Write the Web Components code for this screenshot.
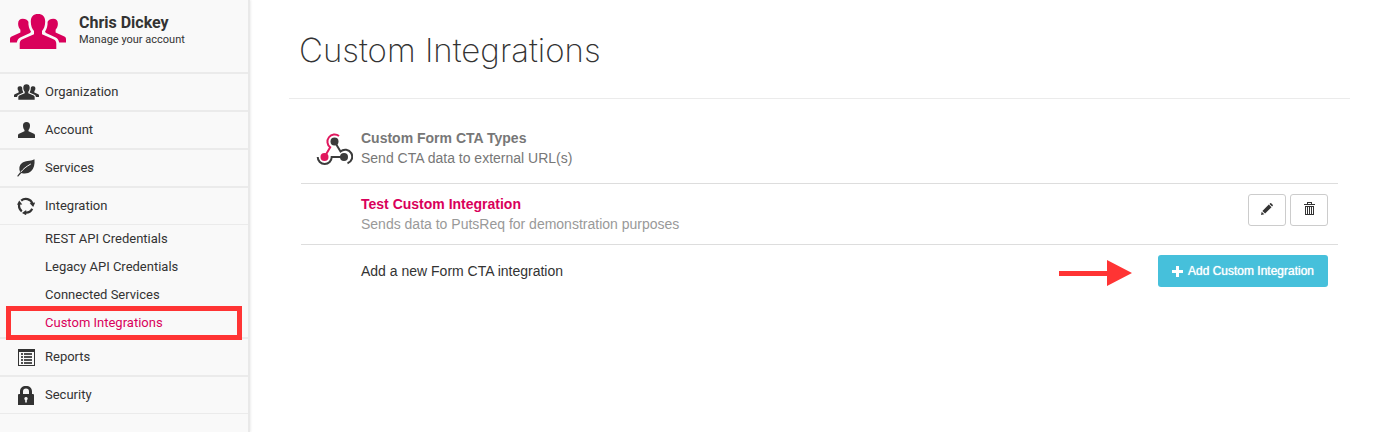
<!DOCTYPE html>
<html lang="en">
<head>
<meta charset="utf-8">
<meta name="viewport" content="width=device-width, initial-scale=1">
<title>Custom Integrations</title>
<style>
  body {
    margin: 0;
    background: #fff;
    color: #333;
    font-family: "Liberation Sans", Arial, sans-serif;
    font-size: 14px;
    line-height: 20px;
  }
</style>
</head>
<body>
<app-shell>
  <side-nav slot="nav">
    <account-card slot="account" name="Chris Dickey">Manage your account</account-card>
    <nav-item icon="group" label="Organization"></nav-item>
    <nav-item icon="person" label="Account"></nav-item>
    <nav-item icon="leaf" label="Services"></nav-item>
    <nav-item icon="cycle" label="Integration">
      <nav-link>REST API Credentials</nav-link>
      <nav-link>Legacy API Credentials</nav-link>
      <nav-link>Connected Services</nav-link>
      <nav-link current>Custom Integrations</nav-link>
    </nav-item>
    <nav-item icon="report" label="Reports"></nav-item>
    <nav-item icon="lock" label="Security"></nav-item>
  </side-nav>
  <page-title>Custom Integrations</page-title>
  <integration-list>
    <integration-head>
      Custom Form CTA Types
      <span slot="note">Send CTA data to external URL(s)</span>
    </integration-head>
    <integration-row>
      Test Custom Integration
      <span slot="note">Sends data to PutsReq for demonstration purposes</span>
    </integration-row>
    <integration-add action="Add Custom Integration">Add a new Form CTA integration</integration-add>
  </integration-list>
</app-shell>

<script>
const ICONS = {
  group: {
    box: "0 0 56 35",
    body: `
      <path d="M28 0c4.600 0 7.200 2.600 7.200 7.500 0 4.500-1.400 7.500-3.200 9.500v3.200l12 5.300c1.600.8 2.300 2.200 2.300 4.500v5H9.700v-5c0-2.300.7-3.700 2.300-4.500l12-5.300V17c-1.800-2-3.200-5-3.200-9.500C20.800 2.600 23.400 0 28 0z"/>
      <path d="M12.800 4.800c2.700 0 4.600 1 5.600 3-.2 4 .8 7.200 2.600 10l-1 1.200-9.800 4.500c-1.600.8-2.800 2.400-3.400 5H0v-3.600c0-1.200.5-2 1.600-2.500l8.800-4v-2.600c-1.300-1.600-2.300-3.400-2.300-6 0-3.300 1.700-5 4.700-5z"/>
      <path d="M43.200 4.800c-2.700 0-4.600 1-5.600 3 .2 4-.8 7.200-2.600 10l1 1.200 9.800 4.500c1.600.8 2.800 2.400 3.400 5H56v-3.600c0-1.200-.5-2-1.600-2.500l-8.800-4v-2.600c1.300-1.600 2.300-3.400 2.300-6 0-3.300-1.700-5-4.700-5z"/>`
  },
  person: {
    box: "0 0 17 16",
    body: `<path d="M8.500 0c2.300 0 3.500 1.300 3.500 3.500 0 2-.7 3.500-1.500 4.500v1.200l5.500 2.500c.7.300 1 .9 1 1.900V16H0v-2.400c0-1 .3-1.600 1-1.900l5.500-2.500V8C5.700 7 5 5.500 5 3.500 5 1.300 6.200 0 8.500 0z"/>`
  },
  leaf: {
    box: "0 0 18 18",
    body: `
      <path d="M17.500.3c.4 5.200-.5 9.400-3.500 12-2.700 2.300-6.200 2.700-9.600 1.700L1 17.800.2 17l2.900-3.700C1.600 9.600 2.300 6.200 5 4 8 1.500 13 2.600 17.500.3z"/>
      <path d="M3.600 13.300c2.700-3.500 6-6 10.200-8.300" fill="none" stroke="#f9f9f9" stroke-width="1"/>`
  },
  cycle: {
    box: "0 0 18 18",
    body: `
      <g fill="none" stroke="currentColor" stroke-width="2.200">
        <path d="M4.200 3.600A7 7 0 0 1 15.400 6.500"/>
        <path d="M15.200 11.800A7 7 0 0 1 8.500 15.700"/>
        <path d="M4.800 14.300A7 7 0 0 1 2.300 7"/>
      </g>
      <path d="M12.700 6.200 18.200 5.500 16.200 10zM9.200 13v5.300L5 15.900zM0 7.800 2.200 3.400 5.300 7.500z"/>`
  },
  report: {
    box: "0 0 17 17",
    body: `
      <path fill-rule="evenodd" d="M0 0h17v17H0zM1 3v13h15V3z"/>
      <path d="M3 4h2v2H3zM6 4h8v2H6zM3 7h2v2H3zM6 7h8v2H6zM3 10h2v2H3zM6 10h8v2H6zM3 13h2v2H3zM6 13h8v2H6z" opacity=".85"/>`
  },
  lock: {
    box: "0 0 16 19",
    body: `<path fill-rule="evenodd" d="M2 8V5.500C2 2 4.300 0 8 0s6 2 6 5.500V8h1q1 0 1 1v10H0V9q0-1 1-1zM5 8h6V5.500C11 3.700 10 2.600 8 2.600S5 3.700 5 5.500zM8 11a1.700 1.700 0 0 0-.8 3.200V16.500h1.600v-2.300A1.700 1.700 0 0 0 8 11z"/>`
  },
  webhook: {
    box: "0 0 37 35",
    body: `
      <g fill="none" stroke-width="2">
        <path stroke="#e0185e" d="M23 4A7 7 0 1 0 14.200 15.300L8.500 25"/>
        <path stroke="#3b3b3b" d="M18.500 9.500l6 10A7 7 0 1 1 31.500 31.300"/>
        <path stroke="#3b3b3b" d="M28 25H15.700A7 7 0 0 1 1.700 25"/>
      </g>
      <circle cx="18.500" cy="9.500" r="4" fill="#3b3b3b"/>
      <circle cx="8.500" cy="25" r="4" fill="#e0185e"/>
      <circle cx="28" cy="25" r="4" fill="#3b3b3b"/>`
  },
  pencil: {
    box: "0 0 12 12",
    body: `<path d="M0 12l.7-3.300 2.600 2.600zM1.400 7.900 7.800 1.500l2.700 2.700-6.400 6.400zM8.500.9l.7-.6q.5-.5 1 0l1.500 1.500q.5.500 0 1l-.6.700z"/>`
  },
  trash: {
    box: "0 0 11 13",
    body: `
      <path d="M0 2h11v1H0zM3 0h5v2H7V1H4v1H3z"/>
      <path fill-rule="evenodd" d="M1 4h9v9H1zM2 5v7h1V5zM4 5v7h1V5zM6 5v7h1V5zM8 5v7h1V5z"/>`
  },
  plus: {
    box: "0 0 11 11",
    body: `<path d="M4 0h3v4h4v3H7v4H4V7H0V4h4z"/>`
  },
  arrow: {
    box: "0 0 73 26",
    body: `<path d="M0 11h48V0l25 13-25 13V16H0z"/>`
  }
};

// Shared base: every element renders its html() into an open shadow root
class BaseElement extends HTMLElement {
  constructor() {
    super();
    this.attachShadow({ mode: "open" });
  }
  connectedCallback() {
    this.shadowRoot.innerHTML = this.html();
  }
  html() {
    return "";
  }
}

class AppIcon extends BaseElement {
  html() {
    const icon = ICONS[this.getAttribute("name")];
    const [, , w, h] = icon.box.split(" ");
    const width = this.getAttribute("width") || w;
    return `
      <style>
        :host { display: inline-flex; flex: none; }
        svg { display: block; fill: currentColor; }
      </style>
      <svg viewBox="${icon.box}" width="${width}" height="${Math.round(width * h / w)}" aria-hidden="true">${icon.body}</svg>
    `;
  }
}

class AppShell extends BaseElement {
  html() {
    return `
      <style>
        :host {
          display: grid;
          grid-template-columns: 250px 1fr;
          min-height: 100vh;
        }
        main { padding: 0 27px 0 39px; min-width: 0; }
      </style>
      <slot name="nav"></slot>
      <main><slot></slot></main>
    `;
  }
}

class SideNav extends BaseElement {
  html() {
    return `
      <style>
        :host {
          display: block;
          box-sizing: border-box;
          background: #f9f9f9;
          border-right: 2px solid #e9e9e9;
          box-shadow: 1px 0 2px #eee;
          font-family: Roboto, sans-serif;
          font-size: 13px;
        }
      </style>
      <slot name="account"></slot>
      <nav><slot></slot></nav>
    `;
  }
}

class AccountCard extends BaseElement {
  html() {
    return `
      <style>
        :host { display: block; border-bottom: 1px solid #ebebeb; }
        a {
          display: flex;
          gap: 13px;
          height: 58px;
          padding: 14px 10px 0;
          color: #333;
          text-decoration: none;
        }
        app-icon { color: #d9005b; }
        strong { display: block; font-size: 16px; line-height: 18px; }
        span { display: block; font-size: 11px; line-height: 16px; }
      </style>
      <a href="#">
        <app-icon name="group"></app-icon>
        <div>
          <strong>${this.getAttribute("name")}</strong>
          <span><slot></slot></span>
        </div>
      </a>
    `;
  }
}

class NavItem extends BaseElement {
  html() {
    const icon = this.getAttribute("icon");
    const hasLinks = this.children.length > 0;
    return `
      <style>
        :host {
          display: block;
          border: solid #ebebeb;
          border-width: 1px 0;
        }
        .head {
          display: grid;
          grid-template-columns: 24px 1fr;
          align-items: center;
          gap: 7px;
          height: 36px;
          padding-left: 14px;
          color: #333;
          text-decoration: none;
        }
        app-icon { justify-self: center; }
        .links { border-top: 1px solid #ebebeb; }
      </style>
      <a class="head" href="#">
        <app-icon name="${icon}" ${icon === "group" ? 'width="25"' : ""}></app-icon>
        ${this.getAttribute("label")}
      </a>
      ${hasLinks ? '<div class="links"><slot></slot></div>' : ""}
    `;
  }
}

class NavLink extends BaseElement {
  html() {
    return `
      <style>
        :host { display: block; position: relative; }
        a {
          display: block;
          padding-left: 45px;
          line-height: 28px;
          color: #333;
          text-decoration: none;
        }
        :host([current]) a { color: #d9005b; }
        /* callout frame, drawn over the neighbouring rows */
        :host([current])::after {
          content: "";
          position: absolute;
          inset: -3px 6px;
          z-index: 1;
          border: 5px solid #ff3434;
          pointer-events: none;
        }
      </style>
      <a href="#"><slot></slot></a>
    `;
  }
}

class PageTitle extends BaseElement {
  html() {
    return `
      <style>
        :host { display: block; border-bottom: 1px solid #ebebeb; }
        h1 {
          margin: 0;
          padding: 26px 10px 24px;
          font-family: Inter, Roboto, sans-serif;
          font-size: 33px;
          font-weight: 200;
          line-height: 48px;
        }
      </style>
      <h1><slot></slot></h1>
    `;
  }
}

class IntegrationList extends BaseElement {
  html() {
    return `
      <style>
        :host { display: block; padding: 29px 12px 0; }
      </style>
      <slot></slot>
    `;
  }
}

class IntegrationHead extends BaseElement {
  html() {
    return `
      <style>
        :host {
          display: flex;
          gap: 8px;
          padding: 0 15px 15px;
          border-bottom: 1px solid #ddd;
          color: #777;
        }
        app-icon { padding-top: 4px; }
        h2 { margin: 0; font-size: 14px; line-height: 20px; }
      </style>
      <app-icon name="webhook"></app-icon>
      <div>
        <h2><slot></slot></h2>
        <slot name="note"></slot>
      </div>
    `;
  }
}

class IntegrationRow extends BaseElement {
  html() {
    return `
      <style>
        :host {
          display: flex;
          align-items: center;
          justify-content: space-between;
          padding: 10px 10px 10px 60px;
          border-bottom: 1px solid #ddd;
          color: #999;
        }
        h3 { margin: 0; font-size: 14px; line-height: 20px; color: #d9005b; }
        .tools { display: flex; align-self: flex-start; gap: 4px; }
        button {
          display: flex;
          align-items: center;
          justify-content: center;
          width: 38px;
          height: 32px;
          padding: 0 0 3px;
          border: 1px solid #ccc;
          border-radius: 3px;
          background: #fff;
          color: #333;
        }
      </style>
      <div>
        <h3><slot></slot></h3>
        <slot name="note"></slot>
      </div>
      <div class="tools">
        <button type="button" aria-label="Edit"><app-icon name="pencil"></app-icon></button>
        <button type="button" aria-label="Delete"><app-icon name="trash"></app-icon></button>
      </div>
    `;
  }
}

class IntegrationAdd extends BaseElement {
  html() {
    return `
      <style>
        :host {
          display: flex;
          align-items: center;
          gap: 26px;
          padding: 10px 10px 10px 60px;
        }
        .text { flex: 1; }
        app-icon[name="arrow"] { color: #ff3434; padding-top: 3px; }
        button {
          display: flex;
          align-items: center;
          justify-content: center;
          gap: 5px;
          width: 170px;
          height: 32px;
          padding: 0;
          border: 0;
          border-radius: 3px;
          background: #46c0db;
          color: #fff;
          font: 12px/18px "Liberation Sans", Arial, sans-serif;
          text-shadow: 0 0 1px #fff;
        }
      </style>
      <span class="text"><slot></slot></span>
      <app-icon name="arrow"></app-icon>
      <button type="button"><app-icon name="plus"></app-icon>${this.getAttribute("action")}</button>
    `;
  }
}

customElements.define("app-icon", AppIcon);
customElements.define("app-shell", AppShell);
customElements.define("side-nav", SideNav);
customElements.define("account-card", AccountCard);
customElements.define("nav-item", NavItem);
customElements.define("nav-link", NavLink);
customElements.define("page-title", PageTitle);
customElements.define("integration-list", IntegrationList);
customElements.define("integration-head", IntegrationHead);
customElements.define("integration-row", IntegrationRow);
customElements.define("integration-add", IntegrationAdd);
</script>
</body>
</html>
